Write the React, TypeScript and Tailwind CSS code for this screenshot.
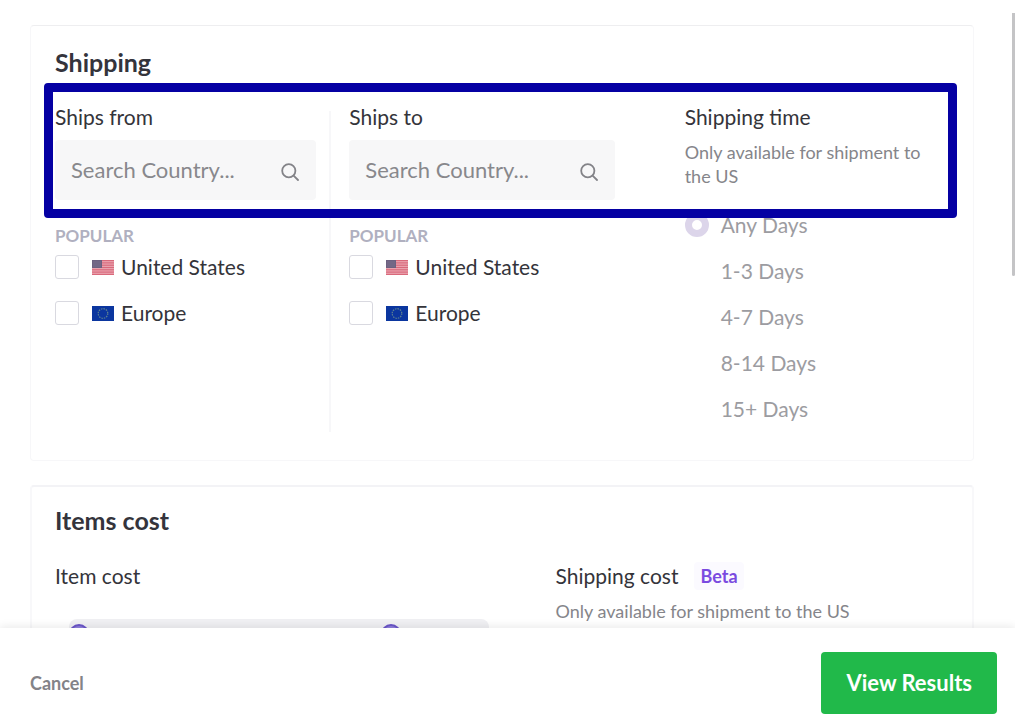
import React, { useState } from 'react';

const COUNTRIES = [
  { id: 'us', name: 'United States' },
  { id: 'eu', name: 'Europe' }
];

const SHIPPING_TIMES = ['Any Days', '1-3 Days', '4-7 Days', '8-14 Days', '15+ Days'];

const SearchIcon = () => (
  <svg viewBox="0 0 18 18" className="mt-1 h-[18px] w-[18px] shrink-0 text-[#838388]" fill="none" stroke="currentColor" strokeWidth="1.8" aria-hidden="true">
    <circle cx="7.8" cy="7.8" r="6.6" />
    <path d="M12.6 12.6L17 17" strokeLinecap="round" />
  </svg>
);

const Flag = ({ id }: { id: string }) => {
  if (id === 'us') {
    return (
      <svg viewBox="0 0 22 15" className="h-[15px] w-[22px] shrink-0" aria-hidden="true">
        <rect width="22" height="15" fill="#eba9b5" />
        {[0, 1, 2, 3, 4, 5, 6].map(i => (
          <rect key={i} y={i * 2.3} width="22" height="1.2" fill="#d9697b" />
        ))}
        <rect width="10" height="8" fill="#6d6180" />
        <path d="M1.5 2h7M1.5 4h7M1.5 6h7" stroke="#9a92aa" strokeWidth=".6" strokeDasharray="1 1" />
      </svg>
    );
  }
  return (
    <svg viewBox="0 0 22 15" className="h-[15px] w-[22px] shrink-0" aria-hidden="true">
      <rect width="22" height="15" fill="#0b369f" />
      <circle cx="11" cy="7.5" r="4.8" fill="none" stroke="#5f8390" strokeWidth="1.2" strokeDasharray="1.5 1" />
    </svg>
  );
};

interface CountryFilterProps {
  id: string;
  title: string;
}

const CountryFilter: React.FC<CountryFilterProps> = ({ id, title }) => {
  const [query, setQuery] = useState('');

  return (
    <div>
      <label htmlFor={`${id}-search`} className="block text-[21px] leading-7">{title}</label>
      <div className="mt-[9px] flex h-[60px] items-center rounded bg-[#f7f7f8] pr-[17px] pl-4">
        <input
          id={`${id}-search`}
          type="text"
          value={query}
          onChange={(e) => setQuery(e.target.value)}
          placeholder="Search Country..."
          className="w-full min-w-0 bg-transparent text-[22px] leading-7 outline-none placeholder:text-[#88888c]"
        />
        <SearchIcon />
      </div>
      <h3 className="mt-7 text-[17px] leading-4 font-bold text-[#b0b0c0]">POPULAR</h3>
      {COUNTRIES.map(c => (
        <label key={c.id} className="flex h-[46px] items-center text-[21px] leading-7">
          <input type="checkbox" className="h-6 w-6 appearance-none rounded-[3px] border border-[#d9d9e0] bg-white checked:bg-[#6a4bd0]" />
          <span className="mr-[7px] ml-[13px]"><Flag id={c.id} /></span>
          {c.name}
        </label>
      ))}
    </div>
  );
};

const THUMB =
  'pointer-events-none absolute inset-x-0 top-[5px] h-5 w-full appearance-none bg-transparent [&::-webkit-slider-thumb]:pointer-events-auto [&::-webkit-slider-thumb]:h-5 [&::-webkit-slider-thumb]:w-5 [&::-webkit-slider-thumb]:appearance-none [&::-webkit-slider-thumb]:rounded-full [&::-webkit-slider-thumb]:border-2 [&::-webkit-slider-thumb]:border-[#6a55c8] [&::-webkit-slider-thumb]:bg-[#8f80dc]';

const App: React.FC = () => {
  const [time, setTime] = useState(SHIPPING_TIMES[0]);
  const [min, setMin] = useState(0);
  const [max, setMax] = useState(78);

  return (
    <div className="flex h-screen flex-col bg-white font-['Lato','Open_Sans',sans-serif] text-[#34343a]">
      <main className="relative min-h-0 flex-1 overflow-hidden pt-[25px] pr-[41px] pl-[30px]">
        <section className="relative rounded border border-[#f7f7f9] border-t-[#eeeef0] px-6 pt-[22px] pb-7">
          <h2 className="text-[25px] leading-7 font-bold text-[#34343c]">Shipping</h2>
          <div className="mt-[27px] grid grid-cols-[276fr_336fr_281fr]">
            <div className="mt-2 border-r-2 border-[#f7f7f9] pr-[13px]">
              <div className="-mt-2">
                <CountryFilter id="from" title="Ships from" />
              </div>
            </div>
            <div className="pr-[53px] pl-[18px]">
              <CountryFilter id="to" title="Ships to" />
            </div>
            <div className="pl-[17px]">
              <h3 className="text-[21px] leading-7">Shipping time</h3>
              <p className="mt-[9px] text-[18px] leading-6 text-[#85858a]">Only available for shipment to the US</p>
              <fieldset disabled aria-label="Shipping time" className="mt-[14px]">
                {SHIPPING_TIMES.map(t => (
                  <label key={t} className="flex h-[46px] items-center gap-3 text-[21px] leading-7 text-[#9c9ca1]">
                    <input
                      type="radio"
                      name="time"
                      checked={time === t}
                      onChange={() => setTime(t)}
                      className="h-6 w-6 appearance-none rounded-full checked:border-[7px] checked:border-[#dcd5ea]"
                    />
                    {t}
                  </label>
                ))}
              </fieldset>
            </div>
          </div>
          <div className="pointer-events-none absolute top-[57px] right-4 left-[13px] h-[135px] rounded-[4px] border-[9px] border-[#0500a3]" />
        </section>

        <section className="mt-6 rounded border-2 border-[#f8f8fa] border-t-[#f3f3f6] px-[23px] pt-[19px] pb-10">
          <h2 className="text-[25px] leading-7 font-bold text-[#34343c]">Items cost</h2>
          <div className="mt-7 grid grid-cols-[500fr_393fr]">
            <div className="pr-[67px]">
              <h3 className="text-[21px] leading-7">Item cost</h3>
              <div className="relative mt-[29px] ml-[14px] h-4 rounded-full bg-[#f0f0f3]">
                <input type="range" aria-label="Minimum item cost" value={min} onChange={(e) => setMin(parseInt(e.target.value))} className={THUMB} />
                <input type="range" aria-label="Maximum item cost" value={max} onChange={(e) => setMax(parseInt(e.target.value))} className={THUMB} />
              </div>
            </div>
            <div>
              <h3 className="flex items-center gap-4 text-[21px] leading-7">
                Shipping cost
                <span className="rounded bg-[#fbfaff] px-1.5 text-[18px] leading-7 font-bold text-[#7a4be0]">Beta</span>
              </h3>
              <p className="mt-[9px] text-[18px] leading-6 text-[#85858a]">Only available for shipment to the US</p>
            </div>
          </div>
        </section>

        <div className="absolute top-[13px] right-0 h-[263px] w-[3px] rounded-b bg-[#c4c4c6]" />
      </main>

      <footer className="relative flex h-[95px] shrink-0 items-center justify-between bg-white pt-3.5 pr-[18px] pl-[30px] shadow-[0_-2px_8px_rgba(0,0,0,0.08)]">
        <button type="button" className="text-[18px] leading-6 font-bold text-[#838388]">Cancel</button>
        <button type="button" className="h-[62px] rounded bg-[#21b94a] px-[25px] text-[22px] leading-7 font-bold text-white">View Results</button>
      </footer>
    </div>
  );
};

export default App;
